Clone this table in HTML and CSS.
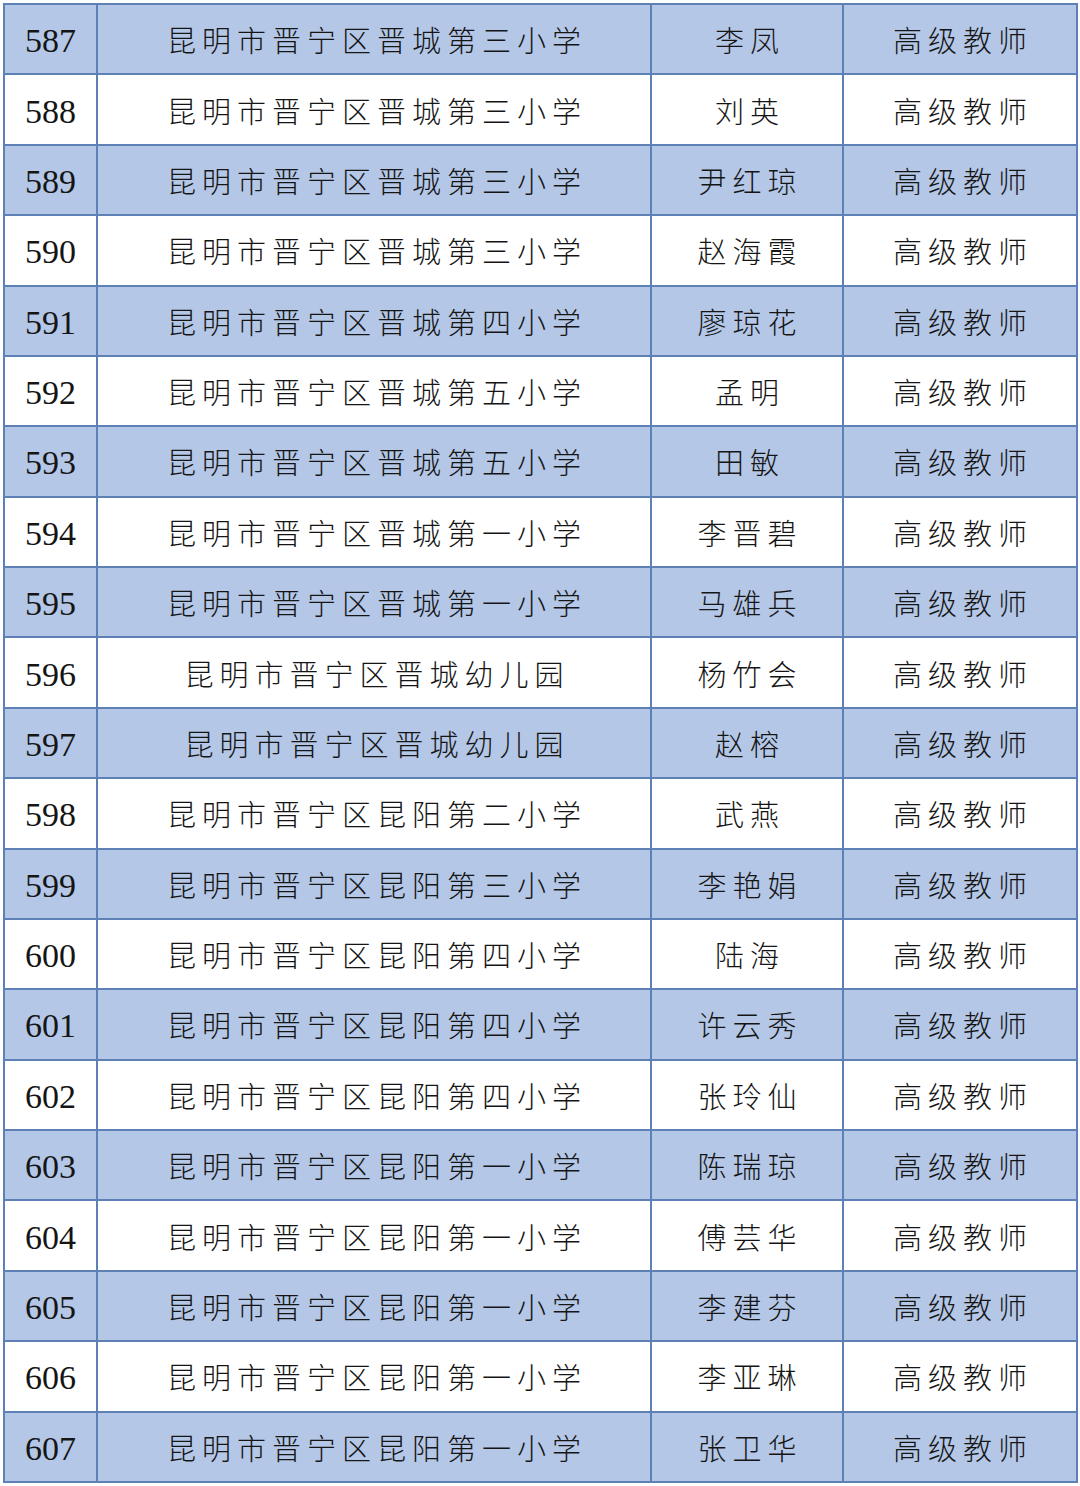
FILE: index.html
```html
<!DOCTYPE html>
<html lang="zh">
<head>
<meta charset="utf-8">
<title>名单</title>
<link rel="stylesheet" href="styles.css">
</head>
<body>
<table class="list">
<colgroup><col class="c-no"><col class="c-school"><col class="c-name"><col class="c-title"></colgroup>
<tbody>
<tr class="alt"><td class="no">587</td><td class="cn">昆明市晋宁区晋城第三小学</td><td class="cn">李凤</td><td class="cn">高级教师</td></tr>
<tr><td class="no">588</td><td class="cn">昆明市晋宁区晋城第三小学</td><td class="cn">刘英</td><td class="cn">高级教师</td></tr>
<tr class="alt"><td class="no">589</td><td class="cn">昆明市晋宁区晋城第三小学</td><td class="cn">尹红琼</td><td class="cn">高级教师</td></tr>
<tr><td class="no">590</td><td class="cn">昆明市晋宁区晋城第三小学</td><td class="cn">赵海霞</td><td class="cn">高级教师</td></tr>
<tr class="alt"><td class="no">591</td><td class="cn">昆明市晋宁区晋城第四小学</td><td class="cn">廖琼花</td><td class="cn">高级教师</td></tr>
<tr><td class="no">592</td><td class="cn">昆明市晋宁区晋城第五小学</td><td class="cn">孟明</td><td class="cn">高级教师</td></tr>
<tr class="alt"><td class="no">593</td><td class="cn">昆明市晋宁区晋城第五小学</td><td class="cn">田敏</td><td class="cn">高级教师</td></tr>
<tr><td class="no">594</td><td class="cn">昆明市晋宁区晋城第一小学</td><td class="cn">李晋碧</td><td class="cn">高级教师</td></tr>
<tr class="alt"><td class="no">595</td><td class="cn">昆明市晋宁区晋城第一小学</td><td class="cn">马雄兵</td><td class="cn">高级教师</td></tr>
<tr><td class="no">596</td><td class="cn">昆明市晋宁区晋城幼儿园</td><td class="cn">杨竹会</td><td class="cn">高级教师</td></tr>
<tr class="alt"><td class="no">597</td><td class="cn">昆明市晋宁区晋城幼儿园</td><td class="cn">赵榕</td><td class="cn">高级教师</td></tr>
<tr><td class="no">598</td><td class="cn">昆明市晋宁区昆阳第二小学</td><td class="cn">武燕</td><td class="cn">高级教师</td></tr>
<tr class="alt"><td class="no">599</td><td class="cn">昆明市晋宁区昆阳第三小学</td><td class="cn">李艳娟</td><td class="cn">高级教师</td></tr>
<tr><td class="no">600</td><td class="cn">昆明市晋宁区昆阳第四小学</td><td class="cn">陆海</td><td class="cn">高级教师</td></tr>
<tr class="alt"><td class="no">601</td><td class="cn">昆明市晋宁区昆阳第四小学</td><td class="cn">许云秀</td><td class="cn">高级教师</td></tr>
<tr><td class="no">602</td><td class="cn">昆明市晋宁区昆阳第四小学</td><td class="cn">张玲仙</td><td class="cn">高级教师</td></tr>
<tr class="alt"><td class="no">603</td><td class="cn">昆明市晋宁区昆阳第一小学</td><td class="cn">陈瑞琼</td><td class="cn">高级教师</td></tr>
<tr><td class="no">604</td><td class="cn">昆明市晋宁区昆阳第一小学</td><td class="cn">傅芸华</td><td class="cn">高级教师</td></tr>
<tr class="alt"><td class="no">605</td><td class="cn">昆明市晋宁区昆阳第一小学</td><td class="cn">李建芬</td><td class="cn">高级教师</td></tr>
<tr><td class="no">606</td><td class="cn">昆明市晋宁区昆阳第一小学</td><td class="cn">李亚琳</td><td class="cn">高级教师</td></tr>
<tr class="alt"><td class="no">607</td><td class="cn">昆明市晋宁区昆阳第一小学</td><td class="cn">张卫华</td><td class="cn">高级教师</td></tr>
</tbody>
</table>
</body>
</html>
```
FILE: styles.css
```css
html, body {
  margin: 0;
  padding: 0;
  background: #ffffff;
}
body {
  padding: 3px 0 0 3px;
}
.list {
  border-collapse: collapse;
  table-layout: fixed;
  width: 1073px;
  color: #151515;
}
.c-no { width: 93px; }
.c-school { width: 554px; }
.c-name { width: 192px; }
.c-title { width: 234px; }
.list td {
  border: 2px solid #5d80b6;
  height: 68.38px;
  padding: 0;
  text-align: center;
  vertical-align: middle;
  white-space: nowrap;
}
.list tr.alt td {
  background: #b4c7e7;
}
.list .no {
  font-family: "Liberation Serif", "Times New Roman", serif;
  font-size: 34px;
  height: 64.38px;
  padding-top: 4px;
}
.list .cn {
  font-family: "Noto Sans CJK SC", sans-serif;
  font-size: 29px;
  font-weight: 300;
  letter-spacing: 6px;
  text-indent: 6px;
}
```
